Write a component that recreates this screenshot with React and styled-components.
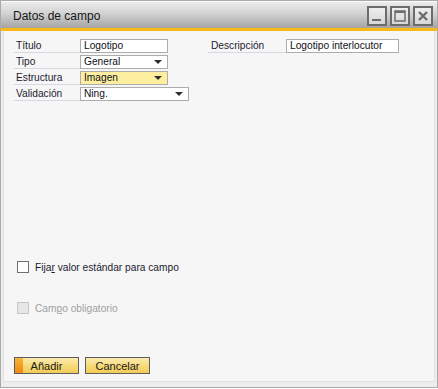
import React from 'react';
import styled, { createGlobalStyle } from 'styled-components';

const Global = createGlobalStyle`
  html, body {
    margin: 0;
    padding: 0;
    background: #ffffff;
  }
  body {
    font-family: "Liberation Sans", Arial, sans-serif;
    font-size: 10.2px;
    color: #1c1c30;
  }
`;

const Window = styled.div`
  width: 438px;
  height: 388px;
  box-sizing: border-box;
  border: 1px solid #aaaaaa;
  background: #ededed;
  display: flex;
  flex-direction: column;
`;

const TitleBar = styled.div`
  height: 27px;
  box-sizing: border-box;
  border-top: 1px solid #fafafa;
  background: linear-gradient(#ececec, #d2d2d2 45%, #a4a4a4);
  display: flex;
  align-items: center;
  padding: 0 4px 0 12px;
`;

const Title = styled.span`
  flex: 1;
  font-size: 12px;
  color: #161616;
  margin-top: 2px;
`;

const Controls = styled.div`
  display: flex;
  gap: 3px;
  margin-top: 1px;
`;

const CtrlButton = styled.div`
  width: 20px;
  height: 20px;
  box-sizing: border-box;
  border: 2px solid #6c6c6c;
  background: linear-gradient(#eeeeee, #d6d6d6);
  display: flex;
  align-items: center;
  justify-content: center;
`;

const Accent = styled.div`
  height: 3px;
  background: #f8b816;
`;

const Panel = styled.div`
  flex: 1;
  margin: 0 2px 5px 2px;
  border: 1px solid #e2e2e2;
  border-top: none;
  background: #f6f6f6;
  display: flex;
  flex-direction: column;
  padding: 8px 0 0 10px;
`;

const FormTop = styled.div`
  display: flex;
  gap: 19px;
`;

const Column = styled.div`
  display: flex;
  flex-direction: column;
  gap: 2px;
`;

const Row = styled.div`
  display: flex;
  height: 14px;
`;

const Label = styled.div`
  width: ${p => p.w}px;
  box-sizing: border-box;
  padding-left: ${p => p.pl ?? 2}px;
  border-bottom: 1px solid #d4d9e2;
  line-height: 13px;
  white-space: nowrap;
  color: #1c1c30;
`;

const Field = styled.div`
  width: ${p => p.w}px;
  height: 14px;
  box-sizing: border-box;
  border: 1px solid #acacac;
  background: ${p => (p.$hl ? '#fdef9f' : '#ffffff')};
  display: flex;
  align-items: center;
  padding: 0 5px 0 3px;
  color: #101020;
  line-height: 12px;
`;

const Value = styled.span`
  flex: 1;
  white-space: nowrap;
`;

const Arrow = styled.span`
  width: 0;
  height: 0;
  border-left: 4px solid transparent;
  border-right: 4px solid transparent;
  border-top: 4px solid #2f2f2f;
`;

const CheckRow = styled.div`
  display: flex;
  align-items: center;
  gap: 6px;
  margin-left: 3px;
  margin-top: ${p => p.mt}px;
  height: 12px;
  color: ${p => (p.disabled ? '#a0a0a0' : '#1c1c30')};
`;

const Box = styled.span`
  width: 12px;
  height: 12px;
  box-sizing: border-box;
  border: 1px solid ${p => (p.disabled ? '#c6c6c6' : '#707070')};
  background: ${p => (p.disabled ? '#e6e6e6' : '#ffffff')};
`;

const Buttons = styled.div`
  display: flex;
  gap: 6px;
  margin-top: 43px;
`;

const Button = styled.div`
  width: 65px;
  height: 17px;
  box-sizing: border-box;
  border: 1px solid #5e5e5e;
  background: linear-gradient(#fcebb0, #f6d978 55%, #f2cc55);
  display: flex;
  align-items: stretch;
  color: #1a1a1a;
  font-size: 11px;
`;

const Strip = styled.span`
  width: 8px;
  background: linear-gradient(#f9b436, #ee8a12);
`;

const ButtonText = styled.span`
  flex: 1;
  display: flex;
  align-items: center;
  justify-content: center;
  padding-right: ${p => (p.$strip ? 8 : 0)}px;
`;

const Select = ({ w, hl, children }) => (
  <Field w={w} $hl={hl}>
    <Value>{children}</Value>
    <Arrow />
  </Field>
);

export default function App() {
  return (
    <>
      <Global />
      <Window>
        <TitleBar>
          <Title>Datos de campo</Title>
          <Controls>
            <CtrlButton>
              <svg width="16" height="16" viewBox="0 0 16 16">
                <rect x="3" y="11" width="9" height="2" fill="#6c6c6c" />
              </svg>
            </CtrlButton>
            <CtrlButton>
              <svg width="16" height="16" viewBox="0 0 16 16">
                <rect x="3" y="3" width="10" height="10" fill="none" stroke="#6c6c6c" strokeWidth="1.5" />
                <rect x="3" y="3" width="10" height="2" fill="#6c6c6c" />
              </svg>
            </CtrlButton>
            <CtrlButton>
              <svg width="16" height="16" viewBox="0 0 16 16">
                <path d="M4 4 L12 12 M12 4 L4 12" stroke="#6c6c6c" strokeWidth="2.4" />
              </svg>
            </CtrlButton>
          </Controls>
        </TitleBar>
        <Accent />
        <Panel>
          <FormTop>
            <Column>
              <Row>
                <Label w={66}>Título</Label>
                <Field w={88}><Value>Logotipo</Value></Field>
              </Row>
              <Row>
                <Label w={66}>Tipo</Label>
                <Select w={88}>General</Select>
              </Row>
              <Row>
                <Label w={66}>Estructura</Label>
                <Select w={88} hl>Imagen</Select>
              </Row>
              <Row>
                <Label w={66}>Validación</Label>
                <Select w={109}>Ning.</Select>
              </Row>
            </Column>
            <Column>
              <Row>
                <Label w={78} pl={3}>Descripción</Label>
                <Field w={113}><Value>Logotipo interlocutor</Value></Field>
              </Row>
            </Column>
          </FormTop>
          <CheckRow mt={160}>
            <Box />
            <span>Fija<u>r</u> valor estándar para campo</span>
          </CheckRow>
          <CheckRow mt={29} disabled>
            <Box disabled />
            <span>Cam<u>p</u>o obligatorio</span>
          </CheckRow>
          <Buttons>
            <Button>
              <Strip />
              <ButtonText $strip>Añadir</ButtonText>
            </Button>
            <Button>
              <ButtonText>Cancelar</ButtonText>
            </Button>
          </Buttons>
        </Panel>
      </Window>
    </>
  );
}
